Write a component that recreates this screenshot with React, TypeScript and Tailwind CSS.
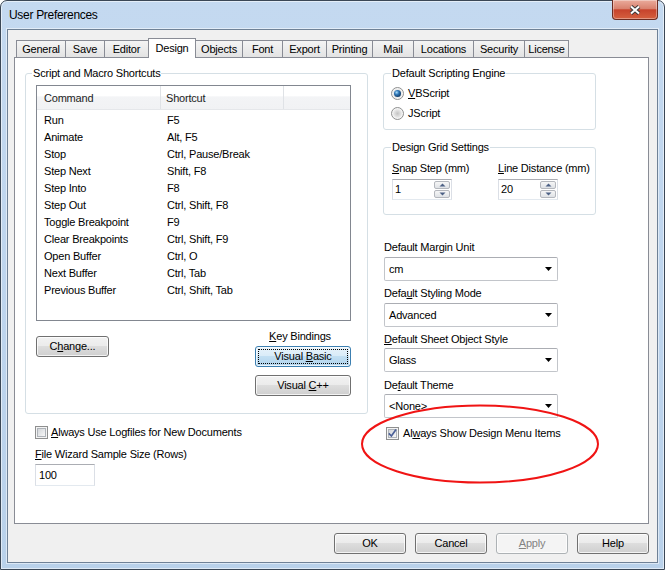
import type { ReactNode } from 'react'

// Win7 "User Preferences" dialog, Design tab

const shortcuts: [string, string][] = [
  ['Run', 'F5'],
  ['Animate', 'Alt, F5'],
  ['Stop', 'Ctrl, Pause/Break'],
  ['Step Next', 'Shift, F8'],
  ['Step Into', 'F8'],
  ['Step Out', 'Ctrl, Shift, F8'],
  ['Toggle Breakpoint', 'F9'],
  ['Clear Breakpoints', 'Ctrl, Shift, F9'],
  ['Open Buffer', 'Ctrl, O'],
  ['Next Buffer', 'Ctrl, Tab'],
  ['Previous Buffer', 'Ctrl, Shift, Tab'],
]

const tabs = [
  { label: 'General', w: 'w-[50px]' },
  { label: 'Save', w: 'w-[40px]' },
  { label: 'Editor', w: 'w-[45px]' },
  { label: 'Design', w: 'w-[48px]', active: true },
  { label: 'Objects', w: 'w-[48px]' },
  { label: 'Font', w: 'w-[41px]' },
  { label: 'Export', w: 'w-[45px]' },
  { label: 'Printing', w: 'w-[47px]' },
  { label: 'Mail', w: 'w-[42px]' },
  { label: 'Locations', w: 'w-[61px]' },
  { label: 'Security', w: 'w-[52px]' },
  { label: 'License', w: 'w-[45px]' },
]

function WinButton({
  children,
  className = '',
  variant = 'normal',
}: {
  children: ReactNode
  className?: string
  variant?: 'normal' | 'default' | 'disabled'
}) {
  const look =
    variant === 'default'
      ? 'border-[#3c7fb1] bg-[linear-gradient(#e8f3fb_0%,#d8ebf8_50%,#c2dff3_50%,#b0d3ec_100%)] outline-1 outline-dotted outline-black outline-offset-[-4px]'
      : variant === 'disabled'
        ? 'border-[#adb2b5] bg-[#f4f4f4] text-[#838383]'
        : 'border-[#707070] bg-[linear-gradient(#f2f2f2_0%,#ebebeb_50%,#dddddd_50%,#cfcfcf_100%)]'
  return (
    <div
      className={`flex h-[21px] shrink-0 items-center justify-center rounded-[3px] border shadow-[inset_0_0_0_1px_rgba(255,255,255,0.75)] ${look} ${className}`}
    >
      <span>{children}</span>
    </div>
  )
}

function CheckBox({ checked }: { checked?: boolean }) {
  return (
    <div className="flex h-[13px] w-[13px] shrink-0 border border-[#8e8f8f] bg-[#f4f4f4] p-px">
      <div className="flex flex-1 items-center justify-center border border-[#aeb3b9] bg-[linear-gradient(135deg,#d3d6da,#f7f7f7)]">
        {checked && (
          <svg width="7" height="7" viewBox="0 0 7 7" className="overflow-visible">
            <path d="M-0.2 3.4 L2.4 6 L7 -0.4" fill="none" stroke="#4a5f97" strokeWidth="1.7" />
          </svg>
        )}
      </div>
    </div>
  )
}

function Radio({ checked, id }: { checked?: boolean; id: string }) {
  return (
    <svg width="13" height="13" viewBox="0 0 13 13" className="shrink-0">
      <defs>
        <radialGradient id={`${id}-bg`} cx="50%" cy="50%" r="55%">
          <stop offset="0" stopColor="#c4c4c4" />
          <stop offset="1" stopColor="#f2f2f2" />
        </radialGradient>
        <radialGradient id={`${id}-dot`} cx="38%" cy="35%" r="70%">
          <stop offset="0" stopColor="#a6dcfb" />
          <stop offset="0.45" stopColor="#2f76b6" />
          <stop offset="1" stopColor="#10375f" />
        </radialGradient>
      </defs>
      <circle cx="6.5" cy="6.5" r="6" fill="#f4f4f4" stroke="#8e8f8f" />
      <circle cx="6.5" cy="6.5" r="4.6" fill={checked ? '#e9e9e9' : `url(#${id}-bg)`} />
      {checked && <circle cx="6.5" cy="6.5" r="3.5" fill={`url(#${id}-dot)`} />}
    </svg>
  )
}

function SpinBox({ value }: { value: string }) {
  const half =
    'flex flex-1 items-center justify-center rounded-[2px] border border-[#b4b7bd] bg-[linear-gradient(#f6f6f6,#dfe2e6)]'
  return (
    <div className="flex h-[21px] w-[60px] border border-[#abadb3] border-b-[#e3e9ef] border-l-[#dbdfe6] border-r-[#dbdfe6] bg-white">
      <div className="flex flex-1 items-center pl-[2px]">{value}</div>
      <div className="flex w-[17px] flex-col gap-px py-px pr-px">
        <div className={half}>
          <svg width="7" height="4" viewBox="0 0 7 4">
            <path d="M0.5 3.5 L3.5 0.5 L6.5 3.5 Z" fill="#4d6185" />
          </svg>
        </div>
        <div className={half}>
          <svg width="7" height="4" viewBox="0 0 7 4">
            <path d="M0.5 0.5 L3.5 3.5 L6.5 0.5 Z" fill="#4d6185" />
          </svg>
        </div>
      </div>
    </div>
  )
}

function Combo({ value }: { value: string }) {
  return (
    <div className="ml-px flex h-[24px] w-[174px] items-center justify-between rounded-[2px] border border-[#c2c5ca] border-t-[#abadb3] bg-white pl-[4px] pr-[5px]">
      <span>{value}</span>
      <svg width="7" height="4" viewBox="0 0 7 4">
        <path d="M0 0 H7 L3.5 4 Z" fill="#000" />
      </svg>
    </div>
  )
}

export default function App() {
  return (
    <div className="flex h-[570px] w-[665px] flex-col rounded-t-[7px] border border-[#3b4756] bg-[linear-gradient(180deg,#c4d9f0_0%,#bdd4ed_60%,#b9d1ea_100%)] px-[6px] pb-[6px] font-['Liberation_Sans',Arial,sans-serif] text-[11px] tracking-[-0.2px] text-black shadow-[inset_0_0_0_1px_rgba(255,255,255,0.55)]">
      {/* Title bar */}
      <div className="flex h-[28px] shrink-0 items-start justify-between">
        <span className="self-center pl-[2px] text-[12px] tracking-[-0.3px]">User Preferences</span>
        <div className="mt-[-1px] flex h-[20px] w-[46px] items-center justify-center rounded-b-[4px] border border-t-0 border-[#6b2c22] bg-[linear-gradient(#eaab9c_0%,#d9826f_45%,#c7432c_52%,#d5603f_100%)] shadow-[inset_0_0_0_1px_rgba(255,255,255,0.35)]">
          <svg width="12" height="10" viewBox="0 0 12 10">
            <path d="M2 1.5 L10 8.5 M10 1.5 L2 8.5" stroke="#3a3a3a" strokeWidth="4" />
            <path d="M2 1.5 L10 8.5 M10 1.5 L2 8.5" stroke="#ffffff" strokeWidth="2" />
          </svg>
        </div>
      </div>

      {/* Client area */}
      <div className="flex flex-1 flex-col border border-[#6f8196] bg-[#f0f0f0] pl-[6px] pr-[8px] pt-[8px] shadow-[0_0_0_1px_rgba(255,255,255,0.5)]">
        {/* Tabs */}
        <div className="relative z-10 flex h-[19px] items-end pl-[2px]">
          {tabs.map((t, i) =>
            t.active ? (
              <div
                key={t.label}
                className={`${t.w} relative z-10 -ml-px mb-[-1px] flex h-[20px] justify-center border border-b-0 border-[#898c95] bg-white pt-[2px] leading-[14px]`}
              >
                {t.label}
              </div>
            ) : (
              <div
                key={t.label}
                className={`${t.w} ${i === 0 ? '' : '-ml-px'} flex h-[17px] justify-center border border-b-0 border-[#898c95] bg-[linear-gradient(#f4f4f4,#e3e3e3)] pt-[1px] leading-[14px]`}
              >
                {t.label}
              </div>
            ),
          )}
        </div>

        {/* Tab panel */}
        <div className="relative flex h-[467px] border border-[#898c95] bg-white pl-[10px] pt-[8px]">
          {/* Left column */}
          <div className="flex w-[358px] shrink-0 flex-col">
            <fieldset className="w-[343px] rounded-[3px] border border-[#d5dfe5] pb-[17px]">
              <legend className="ml-[6px] px-px leading-[14px]">Script and Macro Shortcuts</legend>
              <div className="ml-[10px] mt-[5px] flex h-[236px] w-[315px] flex-col border border-[#828790] bg-white">
                <div className="flex h-[24px] shrink-0 border-b border-[#e5e7ea] bg-[linear-gradient(#ffffff_0%,#ffffff_45%,#f3f4f6_46%,#f1f2f4_100%)] text-[#1e1e1e]">
                  <div className="flex w-[124px] items-center border-r border-[#dfe2e6] pl-[7px] pt-px">Command</div>
                  <div className="flex w-[123px] items-center border-r border-[#dfe2e6] pl-[5px] pt-px">Shortcut</div>
                  <div className="flex-1" />
                </div>
                <div className="flex flex-col pt-[2px]">
                  {shortcuts.map(([cmd, key]) => (
                    <div key={cmd} className="flex h-[17px] items-center">
                      <div className="w-[124px] pl-[7px]">{cmd}</div>
                      <div className="w-[123px] pl-[6px]">{key}</div>
                    </div>
                  ))}
                </div>
              </div>
              <div className="flex justify-between pl-[10px] pr-[16px]">
                <WinButton className="mt-[15px] w-[73px]">
                  C<u>h</u>ange...
                </WinButton>
                <div className="mt-[8px] flex w-[96px] flex-col items-center">
                  <span className="pr-[6px] leading-[14px]">
                    <u>K</u>ey Bindings
                  </span>
                  <WinButton variant="default" className="mt-[3px] w-[96px]">
                    Visual <u>B</u>asic
                  </WinButton>
                  <WinButton className="mt-[8px] w-[96px]">
                    Visual <u>C</u>++
                  </WinButton>
                </div>
              </div>
            </fieldset>

            <div className="ml-[10px] mt-[12px] flex h-[13px] items-center">
              <CheckBox />
              <span className="ml-[3px]">
                <u>A</u>lways Use Logfiles for New Documents
              </span>
            </div>
            <div className="ml-[10px] mt-[8px] leading-[14px]">
              <u>F</u>ile Wizard Sample Size (Rows)
            </div>
            <div className="ml-[10px] mt-[3px] flex h-[22px] w-[60px] items-center border border-[#abadb3] border-b-[#e3e9ef] border-l-[#dbdfe6] border-r-[#dbdfe6] bg-white pl-[3px]">
              100
            </div>
          </div>

          {/* Right column */}
          <div className="flex w-[213px] shrink-0 flex-col">
            <fieldset className="rounded-[3px] border border-[#d5dfe5] pb-[9px]">
              <legend className="ml-[7px] px-px leading-[14px]">Default Scripting Engine</legend>
              <div className="mt-[6px] flex h-[14px] items-center pl-[7px]">
                <Radio id="vb" checked />
                <span className="ml-[4px]">
                  <u>V</u>BScript
                </span>
              </div>
              <div className="mt-[6px] flex h-[14px] items-center pl-[7px]">
                <Radio id="js" />
                <span className="ml-[4px]">JScript</span>
              </div>
            </fieldset>

            <fieldset className="mt-[10px] rounded-[3px] border border-[#d5dfe5] pb-[14px]">
              <legend className="ml-[7px] px-px leading-[14px]">Design Grid Settings</legend>
              <div className="flex pl-[8px]">
                <div className="w-[106px]">
                  <div className="mt-[7px] leading-[14px]">
                    <u>S</u>nap Step (mm)
                  </div>
                  <div className="mt-[4px]">
                    <SpinBox value="1" />
                  </div>
                </div>
                <div>
                  <div className="mt-[7px] leading-[14px]">
                    <u>L</u>ine Distance (mm)
                  </div>
                  <div className="mt-[4px]">
                    <SpinBox value="20" />
                  </div>
                </div>
              </div>
            </fieldset>

            <div className="mt-[25px] pl-px leading-[14px]">Default Margin Unit</div>
            <div className="mt-[3px]">
              <Combo value="cm" />
            </div>
            <div className="mt-[5px] pl-px leading-[14px]">
              Defa<u>u</u>lt Styling Mode
            </div>
            <div className="mt-[3px]">
              <Combo value="Advanced" />
            </div>
            <div className="mt-[5px] pl-px leading-[14px]">
              <u>D</u>efault Sheet Object Style
            </div>
            <div className="mt-[2px]">
              <Combo value="Glass" />
            </div>
            <div className="mt-[6px] pl-px leading-[14px]">
              De<u>f</u>ault Theme
            </div>
            <div className="mt-[2px]">
              <Combo value="<None>" />
            </div>
            <div className="mt-[9px] flex h-[13px] items-center pl-[3px]">
              <CheckBox checked />
              <span className="ml-[4px]">
                Al<u>w</u>ays Show Design Menu Items
              </span>
            </div>
          </div>

          {/* Red annotation ellipse drawn over the dialog */}
          <svg
            width="242"
            height="84"
            viewBox="0 0 242 84"
            className="pointer-events-none absolute left-[344px] top-[345px]"
          >
            <ellipse cx="121" cy="41" rx="118" ry="38.5" fill="none" stroke="#f01414" strokeWidth="2" />
          </svg>
        </div>

        {/* Dialog buttons */}
        <div className="mt-[9px] flex justify-end gap-[9px]">
          <WinButton className="w-[72px]">OK</WinButton>
          <WinButton className="w-[72px]">Cancel</WinButton>
          <WinButton variant="disabled" className="w-[72px]">
            <u>A</u>pply
          </WinButton>
          <WinButton className="w-[72px]">Help</WinButton>
        </div>
      </div>
    </div>
  )
}
